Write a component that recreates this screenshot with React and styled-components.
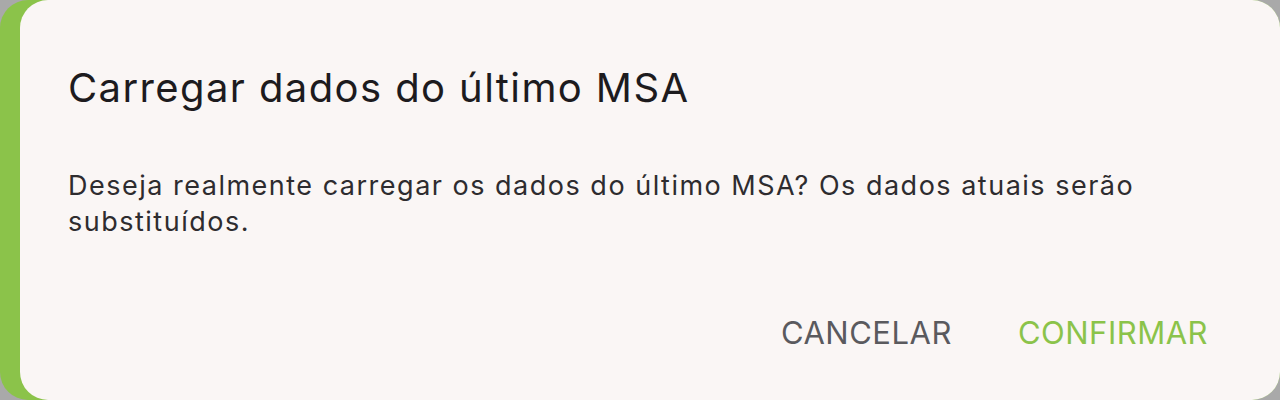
import * as React from "react";
import styled, { createGlobalStyle } from "styled-components";

const GlobalStyle = createGlobalStyle`
  html, body {
    margin: 0;
    padding: 0;
    background: #a9a9a9;
  }
  body {
    font-family: Inter, "Noto Sans", sans-serif;
  }
`;

const Backdrop = styled.div`
  width: 1280px;
  height: 400px;
  overflow: hidden;
  background: #a9a9a9;
`;

const AccentCard = styled.div`
  height: 100%;
  display: flex;
  background: #8bc34a;
  border-radius: 28px;
  padding-left: 20px;
  box-sizing: border-box;
`;

const Dialog = styled.div`
  flex: 1;
  display: flex;
  flex-direction: column;
  background: #faf6f5;
  border-radius: 28px;
  padding: 61px 48px 0 48px;
`;

const Title = styled.h2`
  margin: 0;
  font-size: 40px;
  line-height: 54px;
  font-weight: 400;
  letter-spacing: 1.4px;
  color: #1d1b1e;
`;

const Message = styled.p`
  margin: 53px 0 0 0;
  font-size: 27px;
  line-height: 36px;
  font-weight: 400;
  letter-spacing: 1.5px;
  color: #2e2c2f;
`;

const Actions = styled.div`
  display: flex;
  justify-content: flex-end;
  gap: 18px;
  margin-top: auto;
  margin-bottom: 37px;
`;

const ActionButton = styled.button`
  border: none;
  background: transparent;
  padding: 8px 24px;
  font-family: inherit;
  font-size: 31px;
  line-height: 44px;
  font-weight: 400;
  letter-spacing: 0.5px;
  text-transform: uppercase;
  color: ${(p) => (p.$primary ? "#8bc34a" : "#5a5a5e")};
  cursor: pointer;
`;

export default function App() {
  return (
    <>
      <GlobalStyle />
      <Backdrop>
        <AccentCard>
          <Dialog>
            <Title>Carregar dados do último MSA</Title>
            <Message>
              Deseja realmente carregar os dados do último MSA? Os dados atuais
              serão substituídos.
            </Message>
            <Actions>
              <ActionButton>Cancelar</ActionButton>
              <ActionButton $primary>Confirmar</ActionButton>
            </Actions>
          </Dialog>
        </AccentCard>
      </Backdrop>
    </>
  );
}
